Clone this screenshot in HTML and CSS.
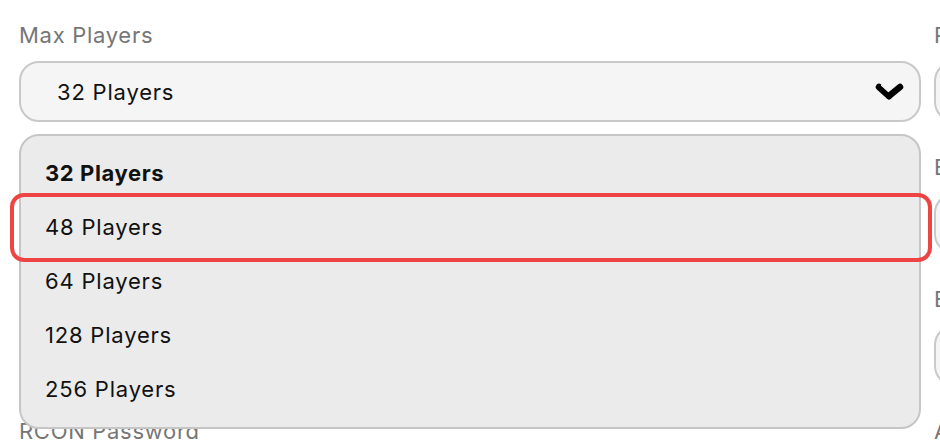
FILE: index.html
```html
<!DOCTYPE html>
<html lang="en">
<head>
<meta charset="utf-8">
<title>Server Settings</title>
<link rel="stylesheet" href="styles.css">
</head>
<body>
<div class="page">
  <div class="grid">
    <div class="column">
      <div class="field field-select">
        <label class="label">Max Players</label>
        <div class="select">
          <span class="select-value">32 Players</span>
          <svg class="chevron" width="30" height="20" viewBox="0 0 30 20">
            <line x1="4" y1="5" x2="14" y2="14" stroke="#000" stroke-width="6.5" stroke-linecap="round"/>
            <line x1="6.5" y1="3.2" x2="14.5" y2="10.5" stroke="#fff" stroke-width="1.2" stroke-linecap="round"/>
            <line x1="14" y1="14" x2="25" y2="5" stroke="#000" stroke-width="6.5" stroke-linecap="round"/>
          </svg>
        </div>
        <ul class="menu">
          <li class="menu-item selected">32 Players</li>
          <li class="menu-item highlighted">48 Players</li>
          <li class="menu-item">64 Players</li>
          <li class="menu-item">128 Players</li>
          <li class="menu-item">256 Players</li>
        </ul>
      </div>
      <div class="field">
        <label class="label">Server Name</label>
        <div class="input"></div>
      </div>
      <div class="field">
        <label class="label">Game Mode</label>
        <div class="input"></div>
      </div>
      <div class="field">
        <label class="label">RCON Password</label>
        <div class="input"></div>
      </div>
    </div>
    <div class="column">
      <div class="field">
        <label class="label">Port</label>
        <div class="input"></div>
      </div>
      <div class="field">
        <label class="label">Enable Whitelist</label>
        <div class="input"></div>
      </div>
      <div class="field">
        <label class="label">Enable Anti-Cheat</label>
        <div class="input"></div>
      </div>
      <div class="field">
        <label class="label">Admin Password</label>
        <div class="input"></div>
      </div>
    </div>
  </div>
</div>
</body>
</html>
```

FILE: styles.css
```css
html, body {
  margin: 0;
  padding: 0;
  background: #ffffff;
}

body {
  font-family: Inter, "Noto Sans", "Liberation Sans", sans-serif;
  color: #111111;
  overflow: hidden;
}

.page {
  padding: 20px 0 0 19px;
  width: 940px;
  height: 448px;
  box-sizing: border-box;
  overflow: hidden;
}

.grid {
  display: grid;
  grid-template-columns: 902px 400px;
  column-gap: 13px;
}

.column {
  display: flex;
  flex-direction: column;
  gap: 30px;
}

.field {
  display: flex;
  flex-direction: column;
  gap: 10px;
}

.field-select {
  position: relative;
  z-index: 2;
}

.label {
  font-size: 22px;
  line-height: 31px;
  color: #767676;
  letter-spacing: 0.7px;
  white-space: nowrap;
}

.select,
.input {
  height: 61px;
  box-sizing: border-box;
  border: 2px solid #c9c9c9;
  border-radius: 20px;
  background: #f5f5f5;
}

.select {
  display: flex;
  align-items: center;
  justify-content: space-between;
  padding: 0 14px 0 36px;
}

.select-value {
  font-size: 22px;
  letter-spacing: 0.8px;
  color: #111111;
}

.chevron {
  display: block;
  margin-top: 1px;
}

.menu {
  position: absolute;
  left: 0;
  right: 0;
  top: 114px;
  margin: 0;
  padding: 10px 0 11px;
  list-style: none;
  background: #ebebeb;
  border: 2px solid #c6c6c6;
  border-radius: 20px;
}

.menu-item {
  position: relative;
  height: 54px;
  display: flex;
  align-items: center;
  padding-left: 24px;
  font-size: 22px;
  letter-spacing: 0.8px;
  color: #111111;
}

.menu-item.selected {
  font-weight: 700;
  letter-spacing: 0.6px;
}

.menu-item.highlighted::after {
  content: "";
  position: absolute;
  left: -11px;
  right: -13px;
  top: -7px;
  bottom: -8px;
  border: 4.5px solid #ef4444;
  border-radius: 14px;
}
```
